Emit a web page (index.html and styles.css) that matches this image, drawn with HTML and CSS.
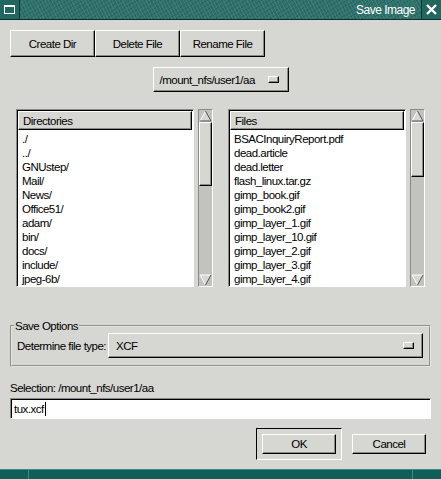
FILE: index.html
```html
<!DOCTYPE html>
<html lang="en">
<head>
  <meta charset="UTF-8" />
  <title>Save Image</title>
  <link rel="stylesheet" href="styles.css">
</head>
<body>
  <div class="window">

    <!-- title bar -->
    <div class="titlebar">
      <div class="tb-box tb-menu">
        <svg width="11" height="9" viewBox="0 0 11 9"><rect x="0.5" y="0.5" width="10" height="8" fill="none" stroke="#fff"/><rect x="0" y="0" width="11" height="2" fill="#fff"/></svg>
      </div>
      <div class="tb-title">Save Image</div>
      <div class="tb-box tb-close">
        <svg width="11" height="11" viewBox="0 0 11 11"><path d="M1 1 L10 10 M10 1 L1 10" stroke="#fff" stroke-width="2.4"/></svg>
      </div>
    </div>

    <div class="content">
      <div class="toolbar">
        <button class="btn tool">Create Dir</button>
        <button class="btn tool">Delete File</button>
        <button class="btn tool">Rename File</button>
      </div>

      <div class="path-row">
        <div class="optmenu path-menu">
          <span>/mount_nfs/user1/aa</span>
          <span class="indicator"></span>
        </div>
      </div>

      <div class="lists">
        <div class="pane">
          <div class="list">
            <div class="list-head">Directories</div>
            <div class="row">./</div>
            <div class="row">../</div>
            <div class="row">GNUstep/</div>
            <div class="row">Mail/</div>
            <div class="row">News/</div>
            <div class="row">Office51/</div>
            <div class="row">adam/</div>
            <div class="row">bin/</div>
            <div class="row">docs/</div>
            <div class="row">include/</div>
            <div class="row">jpeg-6b/</div>
          </div>
          <div class="scrollbar">
            <svg class="arrow" width="13" height="12" viewBox="0 0 13 12"><path d="M6.5 1 L1 11 L12 11 Z" fill="#d6d6d2"/><path d="M1 11 L6.5 1" stroke="#fff"/><path d="M6.5 1 L12 11 L1 11" stroke="#555" fill="none"/></svg>
            <div class="trough"><div class="thumb" style="height: 64px"></div></div>
            <svg class="arrow" width="13" height="12" viewBox="0 0 13 12"><path d="M1 1 L12 1 L6.5 11 Z" fill="#d6d6d2"/><path d="M1 1 L12 1 M1 1 L6.5 11" stroke="#fff" fill="none"/><path d="M12 1 L6.5 11" stroke="#555"/></svg>
          </div>
        </div>
        <div class="pane">
          <div class="list">
            <div class="list-head">Files</div>
            <div class="row">BSACInquiryReport.pdf</div>
            <div class="row">dead.article</div>
            <div class="row">dead.letter</div>
            <div class="row">flash_linux.tar.gz</div>
            <div class="row">gimp_book.gif</div>
            <div class="row">gimp_book2.gif</div>
            <div class="row">gimp_layer_1.gif</div>
            <div class="row">gimp_layer_10.gif</div>
            <div class="row">gimp_layer_2.gif</div>
            <div class="row">gimp_layer_3.gif</div>
            <div class="row">gimp_layer_4.gif</div>
          </div>
          <div class="scrollbar">
            <svg class="arrow" width="13" height="12" viewBox="0 0 13 12"><path d="M6.5 1 L1 11 L12 11 Z" fill="#d6d6d2"/><path d="M1 11 L6.5 1" stroke="#fff"/><path d="M6.5 1 L12 11 L1 11" stroke="#555" fill="none"/></svg>
            <div class="trough"><div class="thumb" style="height: 55px"></div></div>
            <svg class="arrow" width="13" height="12" viewBox="0 0 13 12"><path d="M1 1 L12 1 L6.5 11 Z" fill="#d6d6d2"/><path d="M1 1 L12 1 M1 1 L6.5 11" stroke="#fff" fill="none"/><path d="M12 1 L6.5 11" stroke="#555"/></svg>
          </div>
        </div>
      </div>

      <fieldset class="options">
        <legend>Save Options</legend>
        <div class="opt-row">
          <span class="opt-label">Determine file type:</span>
          <div class="optmenu type-menu">
            <span>XCF</span>
            <span class="indicator"></span>
          </div>
        </div>
      </fieldset>

      <div class="selection">Selection: /mount_nfs/user1/aa</div>
      <div class="entry">tux.xcf<span class="cursor"></span></div>

      <div class="actions">
        <div class="default-frame"><button class="btn action">OK</button></div>
        <button class="btn action">Cancel</button>
      </div>
    </div>

    <div class="bottombar">
      <div class="bb-seg bb-left"></div>
      <div class="bb-seg bb-mid"></div>
      <div class="bb-seg bb-right"></div>
    </div>
  </div>
</body>
</html>
```

FILE: styles.css
```css
body {
  margin: 0;
  background: #d6d6d2;
  font-family: "Liberation Sans", Arial, sans-serif;
  font-size: 11.5px;
  letter-spacing: -0.5px;
  color: #000;
}

.window {
  width: 441px;
  height: 479px;
  display: flex;
  flex-direction: column;
  overflow: hidden;
}

/* title bar */
.titlebar {
  height: 19px;
  border-bottom: 1px solid #0c2e2b;
  display: flex;
  background:
    repeating-linear-gradient(63deg, rgba(255,255,255,0.08) 0 1px, transparent 1px 3px),
    repeating-linear-gradient(-31deg, rgba(0,0,0,0.1) 0 1px, transparent 1px 4px),
    #2d716b;
}

.tb-box {
  width: 19px;
  flex: none;
  display: flex;
  align-items: center;
  justify-content: center;
  background: #22675f;
}

.tb-menu {
  border-right: 1px solid #0f3532;
}

.tb-close {
  border-left: 1px solid #0f3532;
  margin-left: 6px;
}

.tb-title {
  flex: 1;
  text-align: right;
  color: #fff;
  font-size: 12px;
  line-height: 19px;
  padding-top: 1px;
}

.content {
  flex: 1;
  display: flex;
  flex-direction: column;
  padding: 10px 10px 0 10px;
}

/* raised button */
.btn {
  font-family: inherit;
  font-size: 11.5px;
  letter-spacing: -0.5px;
  background: #d6d6d2;
  border: 1px solid;
  border-color: #fff #000 #000 #fff;
  box-shadow: inset -1px -1px 0 #8a8a87;
  padding: 0;
  margin: 0;
  color: #000;
  box-sizing: border-box;
}

.toolbar {
  display: flex;
  height: 27px;
}

.tool {
  width: 85px;
}

.path-row {
  display: flex;
  justify-content: center;
  margin-top: 10px;
}

.optmenu {
  display: flex;
  align-items: center;
  justify-content: space-between;
  background: #d6d6d2;
  border: 1px solid;
  border-color: #fff #000 #000 #fff;
  box-shadow: inset -1px -1px 0 #8a8a87;
  box-sizing: border-box;
}

.path-menu {
  width: 136px;
  height: 25px;
  padding: 0 9px 0 6px;
}

.indicator {
  width: 11px;
  height: 7px;
  box-sizing: border-box;
  border: 1px solid;
  border-color: #fff #000 #000 #fff;
  box-shadow: inset -1px -1px 0 #8a8a87;
}

/* file lists */
.lists {
  display: flex;
  gap: 15px;
  margin-top: 17px;
  padding-left: 6px;
}

.pane {
  display: flex;
  gap: 4px;
  height: 178px;
}

.list {
  width: 178px;
  box-sizing: border-box;
  background: #fff;
  border: 1px solid;
  border-color: #8a8a87 #fff #fff #8a8a87;
  box-shadow: inset 1px 1px 0 #000;
  padding: 1px 0 0 1px;
  overflow: hidden;
}

.list-head {
  height: 19px;
  line-height: 18px;
  padding-left: 4px;
  box-sizing: border-box;
  background: #d6d6d2;
  border: 1px solid;
  border-color: #fff #000 #000 #fff;
  box-shadow: inset -1px -1px 0 #8a8a87;
  margin-right: 1px;
  margin-bottom: 2px;
}

.row {
  height: 14px;
  line-height: 14px;
  padding-left: 4px;
}

.scrollbar {
  width: 15px;
  box-sizing: border-box;
  display: flex;
  flex-direction: column;
  background: #c2c2bf;
  border: 1px solid;
  border-color: #8a8a87 #fff #fff #8a8a87;
}

.arrow {
  display: block;
  flex: none;
}

.trough {
  flex: 1;
}

.thumb {
  box-sizing: border-box;
  background: #d6d6d2;
  border: 1px solid;
  border-color: #fff #000 #000 #fff;
  box-shadow: inset -1px -1px 0 #8a8a87;
}

/* save options */
.options {
  margin: 34px 0 0 0;
  padding: 2px 6px 5px 5px;
  border: 2px groove #e4e4e0;
  height: 46px;
  box-sizing: border-box;
  min-width: 0;
}

.options legend {
  padding: 0 1px;
  margin-left: -3px;
  line-height: 10px;
}

.opt-row {
  display: flex;
  align-items: center;
}

.opt-label {
  flex: none;
  width: 91px;
  white-space: nowrap;
}

.type-menu {
  flex: 1;
  height: 25px;
  padding: 0 8px 0 7px;
}

.selection {
  margin-top: 14px;
  line-height: 14px;
}

.entry {
  margin-top: 3px;
  height: 21px;
  box-sizing: border-box;
  background: #fff;
  border: 1px solid;
  border-color: #8a8a87 #fff #fff #8a8a87;
  box-shadow: inset 1px 1px 0 #000;
  padding: 2px 3px;
  line-height: 16px;
  display: flex;
  align-items: center;
}

.cursor {
  display: inline-block;
  width: 1px;
  height: 14px;
  background: #000;
  margin-left: 1px;
}

.actions {
  display: grid;
  grid-template-columns: 86px 74px;
  column-gap: 10px;
  justify-content: end;
  align-items: center;
  margin-top: 9px;
  padding-right: 5px;
}

.default-frame {
  padding: 5px;
  border: 1px solid;
  border-color: #000 #fff #fff #000;
}

.action {
  width: 100%;
  height: 20px;
  display: block;
}

/* bottom frame */
.bottombar {
  height: 9px;
  display: flex;
  background: #0f5e58;
  border-top: 1px solid #3c8a83;
}

.bb-seg {
  border-right: 1px solid #3c8a83;
}

.bb-left {
  width: 28px;
}

.bb-mid {
  flex: 1;
}

.bb-right {
  width: 28px;
  border-right: none;
}
```
